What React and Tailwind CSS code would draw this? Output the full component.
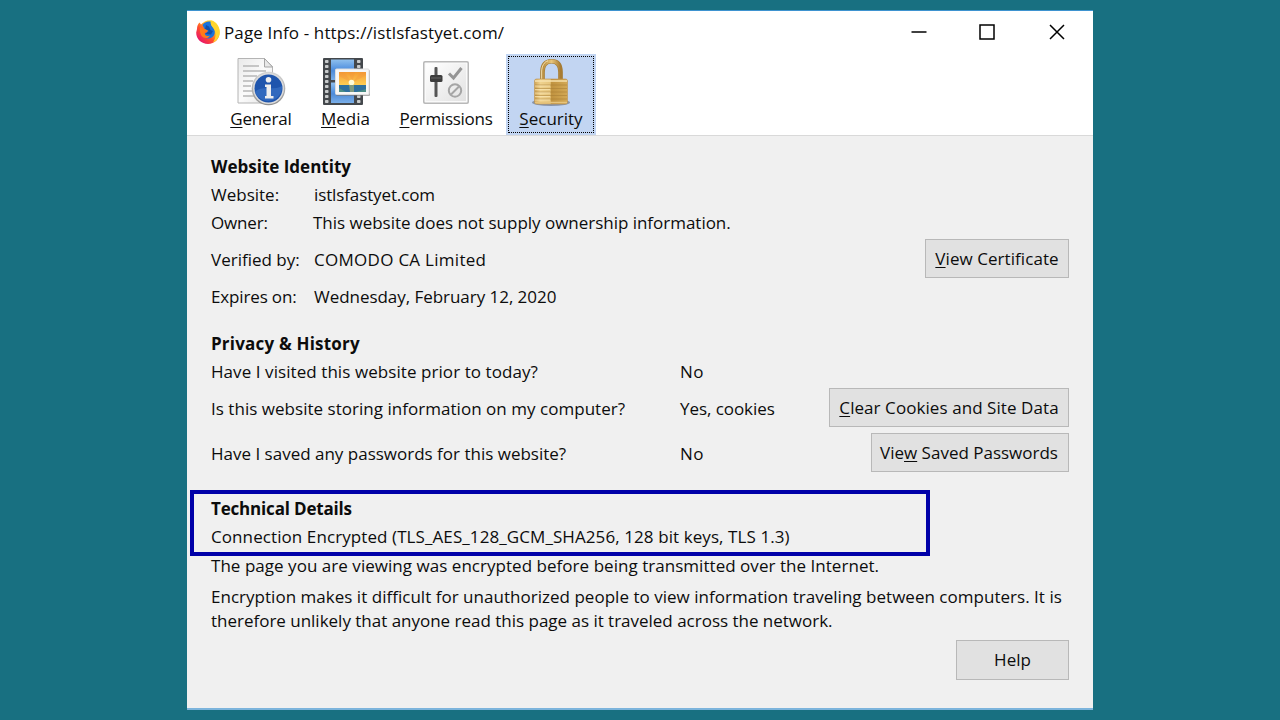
import React from "react";

const K = ({ children }) => (
  <span className="underline decoration-1 underline-offset-2">{children}</span>
);

function FirefoxIcon() {
  return (
    <svg width="24" height="24" viewBox="0 0 24 24">
      <defs>
        <linearGradient id="fx" x1="0.9" y1="0.1" x2="0.15" y2="0.9">
          <stop offset="0" stopColor="#fff44f" />
          <stop offset="0.35" stopColor="#ffb01c" />
          <stop offset="0.62" stopColor="#ff4f2b" />
          <stop offset="1" stopColor="#e8136d" />
        </linearGradient>
      </defs>
      <path d="M1 9C1 6 2 4 3.5 2.5L5 4.5C7 2 11 0 14.5 0.2L17 0.8C21 3 24 7.500 23.800 12.500C23.600 19 18.500 24 12 24C5.500 24 0 19 0.200 12.500Z" fill="url(#fx)" />
      <path d="M6.500 5C8.500 2 12 0.800 15 1.800C14 4 16 6 18 9C20 13 18 18 13 18.500C9.500 18.800 7 17 6 14L10 13L12 11L8.500 9Z" fill="#1a73dc" />
      <path d="M10 5L13 6.500L14.500 10L17 11L15 14.500L9 14L13 11L9 9Z" fill="#0b3e91" opacity=".65" />
      <path d="M15 0.500C21 2 24 8 23.500 13.500C23 18 20 21.500 17 22.500C20 18 20.500 13 18 9C16 6.500 14 4 15 0.500Z" fill="#ffd52e" />
      <path d="M4 7L8.500 9L12 10.500L9 12.500C8 15 11 17 14 15.500C12.500 19 7 19 5 15C4 12.500 3.500 10 4 7Z" fill="#ff7a18" />
    </svg>
  );
}

function GeneralIcon() {
  return (
    <svg width="52" height="52" viewBox="0 0 52 52">
      <defs>
        <linearGradient id="paper" x1="0" y1="0" x2="1" y2="1">
          <stop offset="0" stopColor="#e9e9e9" />
          <stop offset="0.5" stopColor="#fbfbfb" />
          <stop offset="1" stopColor="#e2e2e2" />
        </linearGradient>
        <linearGradient id="ring" x1="0" y1="0" x2="0" y2="1">
          <stop offset="0" stopColor="#d4d4d4" />
          <stop offset="1" stopColor="#8f8f8f" />
        </linearGradient>
      </defs>
      <path d="M3 2.500H29.500L37.500 10.500V47H3Z" fill="url(#paper)" stroke="#b4b4b4" />
      <path d="M29.500 2.500V11H37.500Z" fill="#e8e8e8" stroke="#a5a5a5" />
      <path d="M8 10H24M8 15H31M8 20H22M8 25H18M8 30H16M8 35H17M8 40H20" stroke="#b7b7b7" strokeWidth="1.500" />
      <circle cx="33.500" cy="32.500" r="16.800" fill="url(#ring)" />
      <circle cx="33.500" cy="32.500" r="15.500" fill="#dcdcdc" />
      <circle cx="33.500" cy="32.500" r="14" fill="#1f55ad" />
      <path d="M20 36C26 29 39 35 47 30A14 14 0 0 1 20 36Z" fill="#3c74c8" opacity=".65" />
      <circle cx="33.500" cy="23.800" r="2.800" fill="#eee" />
      <path d="M30 28.500H36V40H38.500V42.500H30V40H31.500V31H30Z" fill="#eee" />
    </svg>
  );
}

function MediaIcon() {
  const holes = [5, 10, 15, 20, 25, 30, 35, 40, 45];
  return (
    <svg width="52" height="52" viewBox="0 0 52 52">
      <defs>
        <linearGradient id="film" x1="0" y1="0" x2="0" y2="1">
          <stop offset="0" stopColor="#8fc0ee" />
          <stop offset="0.45" stopColor="#5493e0" />
          <stop offset="0.55" stopColor="#4e8bd8" />
          <stop offset="1" stopColor="#79aee8" />
        </linearGradient>
        <linearGradient id="sunset" x1="0" y1="0" x2="0" y2="1">
          <stop offset="0" stopColor="#f39b33" />
          <stop offset="1" stopColor="#ffcf55" />
        </linearGradient>
      </defs>
      <rect x="3" y="2" width="40" height="47" rx="1" fill="#44484c" />
      <rect x="11" y="3.500" width="23" height="20.500" fill="url(#film)" />
      <rect x="11" y="26.500" width="23" height="20.500" fill="url(#film)" />
      {holes.map((y) => (
        <g key={y} fill="#c9cccd">
          <rect x="5" y={y - 1} width="3.500" height="3" rx=".7" />
          <rect x="37" y={y - 1} width="3.500" height="3" rx=".7" />
        </g>
      ))}
      <rect x="16" y="14" width="34" height="26" rx="1" fill="#777" opacity=".6" />
      <rect x="15.500" y="13" width="33.500" height="25.500" rx="1" fill="#f7f7f7" stroke="#ddd" />
      <rect x="19" y="16" width="27" height="13.500" fill="url(#sunset)" />
      <path d="M32 27L19 20V16H24ZM32 27L29 16H35ZM32 27L41 16H46V19Z" fill="#f28f3b" opacity=".3" />
      <circle cx="31.500" cy="26.500" r="2.800" fill="#fffbd9" />
      <rect x="19" y="29" width="27" height="7" fill="#2f6f9d" />
      <path d="M29 29H34V36H30Z" fill="#7f9a80" />
      <path d="M19 32L26 36H19ZM46 33V36H36Z" fill="#4b8e86" />
    </svg>
  );
}

function PermissionsIcon() {
  return (
    <svg width="52" height="52" viewBox="0 0 52 52">
      <defs>
        <linearGradient id="panel" x1="0" y1="0" x2="1" y2="1">
          <stop offset="0" stopColor="#ffffff" />
          <stop offset="1" stopColor="#e2e2e2" />
        </linearGradient>
      </defs>
      <rect x="3" y="5" width="46" height="43" rx="2" fill="#b9b9b9" />
      <rect x="4.500" y="6.500" width="43" height="40" rx="1" fill="#fafafa" />
      <rect x="6" y="7.500" width="40" height="37.500" fill="url(#panel)" />
      <rect x="14.500" y="11" width="3" height="30" rx="1" fill="#555" />
      <rect x="10" y="19" width="12.500" height="7" rx="1.500" fill="#3d3d3d" />
      <path d="M11 22H21" stroke="#666" />
      <path d="M29 17.500L33.500 22L41.500 12" fill="none" stroke="#959595" strokeWidth="3" />
      <circle cx="35" cy="34.500" r="6.200" fill="none" stroke="#a5a5a5" strokeWidth="2" />
      <path d="M31 38.500L39 30.500" stroke="#a5a5a5" strokeWidth="2" />
    </svg>
  );
}

function LockIcon() {
  return (
    <svg width="52" height="52" viewBox="0 0 52 52">
      <defs>
        <linearGradient id="brass" x1="0" y1="0" x2="1" y2="0">
          <stop offset="0" stopColor="#d0a455" />
          <stop offset="0.18" stopColor="#f0d38f" />
          <stop offset="0.48" stopColor="#e6c57c" />
          <stop offset="0.5" stopColor="#c0923f" />
          <stop offset="1" stopColor="#d3a956" />
        </linearGradient>
        <linearGradient id="shackle" x1="0" y1="0" x2="1" y2="0">
          <stop offset="0" stopColor="#b58a3d" />
          <stop offset="0.5" stopColor="#e8c67c" />
          <stop offset="1" stopColor="#a87c32" />
        </linearGradient>
      </defs>
      <ellipse cx="26" cy="45.500" rx="19" ry="3.500" fill="#626b78" opacity=".6" />
      <path d="M17.500 24V15C17.500 8 20.500 4.200 26.500 4.200S35.500 8 35.500 15V24" fill="none" stroke="#a37b35" strokeWidth="4.600" />
      <path d="M17.500 24V15C17.500 8 20.500 4.200 26.500 4.200S35.500 8 35.500 15V24" fill="none" stroke="url(#shackle)" strokeWidth="3.400" />
      <path d="M16.700 23V15C16.700 9 19 5 23 3.800" fill="none" stroke="#f6e3b2" />
      <rect x="9.500" y="22" width="33" height="25" rx="2" fill="url(#brass)" stroke="#c0924a" strokeWidth=".6" />
      <path d="M10 24H42" stroke="#f7e2ad" strokeWidth="1.500" />
      <path d="M10 28H42M10 31.500H42M10 35H42M10 38.500H42M10 42H42" stroke="#a47a31" strokeOpacity=".5" />
      <path d="M10 29H25M10 32.500H25M10 36H25M10 39.500H25M10 43H25" stroke="#fae8b8" strokeOpacity=".65" />
      <path d="M10 45.500H42" stroke="#e6c47d" strokeWidth="1.500" />
    </svg>
  );
}

const Button = ({ className, children }) => (
  <button className={`-mt-[2px] flex shrink-0 items-center justify-center whitespace-nowrap border border-[#b8b8b8] bg-[#e1e1e1] ${className}`}>
    {children}
  </button>
);

export default function App() {
  return (
    <div className="flex h-[720px] w-[1280px] flex-col overflow-hidden bg-[#187081] pl-[187px] pt-[10px] font-['Open_Sans',sans-serif] text-[17px] text-[#0c0c0c]">
      <div className="flex h-[700px] w-[906px] flex-col border-b-2 border-t border-b-[#7cb4dc] border-t-[#3e93d0] bg-[#f0f0f0]">
        <header className="flex h-[43px] shrink-0 items-center bg-white pb-[2px] pl-[9px]">
          <FirefoxIcon />
          <h1 className="ml-1 mt-[2px] whitespace-nowrap tracking-[0.13px]">Page Info - https://istlsfastyet.com/</h1>
          <div className="ml-auto mr-[28px] flex w-[154px] items-center">
            <svg width="16" height="16" viewBox="0 0 16 16"><path d="M0.500 8H15.500" stroke="#000" strokeWidth="1.500" /></svg>
            <svg className="ml-[52px]" width="16" height="16" viewBox="0 0 16 16"><rect x="1" y="1" width="14" height="14" fill="none" stroke="#000" strokeWidth="1.500" /></svg>
            <svg className="ml-auto" width="16" height="16" viewBox="0 0 16 16"><path d="M1 1L15 15M15 1L1 15" stroke="#000" strokeWidth="1.500" /></svg>
          </div>
        </header>
        <nav className="flex h-[82px] shrink-0 border-b border-[#d9d9d9] bg-white pl-[31px] text-center">
          <div className="flex w-[86px] flex-col items-center pt-[2px]"><GeneralIcon /><span className="-mt-[2px] tracking-[-0.15px]"><K>G</K>eneral</span></div>
          <div className="flex w-[83px] flex-col items-center pt-[2px]"><MediaIcon /><span className="-mt-[2px]"><K>M</K>edia</span></div>
          <div className="flex w-[118px] flex-col items-center pt-[2px]"><PermissionsIcon /><span className="-mt-[2px] tracking-[-0.27px]"><K>P</K>ermissions</span></div>
          <div className="ml-[1px] h-[81px] w-[90px] bg-[#c2d5f2] p-[2px]">
            <div className="flex h-[77px] flex-col items-center border border-dotted border-black"><LockIcon /><span className="-mt-[3px]"><K>S</K>ecurity</span></div>
          </div>
        </nav>
        <main className="flex flex-col whitespace-nowrap pl-[24px] pr-[24px] pt-[16px]">
          <section className="flex flex-col">
            <h2 className="h-[28px] font-bold leading-[30px]">Website Identity</h2>
            <div className="flex h-[29px] items-center"><span className="w-[103px]">Website:</span><span className="tracking-[-0.12px]">istlsfastyet.com</span></div>
            <div className="flex h-[29px] items-center pb-[2px]"><span className="w-[102px] tracking-[-0.15px]">Owner:</span><span className="tracking-[-0.02px]">This website does not supply ownership information.</span></div>
            <div className="flex h-[42px] items-center"><span className="w-[103px] pt-[2px]">Verified by:</span><span className="pt-[2px] tracking-[0.28px]">COMODO CA Limited</span>
              <Button className="ml-auto h-[39px] w-[144px] pt-[2px]"><span className="tracking-[0.06px]"><K>V</K>iew Certificate</span></Button>
            </div>
            <div className="flex h-[34px] items-center"><span className="w-[103px] tracking-[-0.15px]">Expires on:</span><span className="tracking-[-0.04px]">Wednesday, February 12, 2020</span></div>
          </section>
          <section className="mt-[15px] flex flex-col">
            <h2 className="h-[28px] font-bold leading-[30px] tracking-[0.2px]">Privacy &amp; History</h2>
            <div className="flex h-[29px] items-center"><span className="w-[469px] tracking-[0.07px]">Have I visited this website prior to today?</span><span className="tracking-[0.4px]">No</span></div>
            <div className="flex h-[45px] items-center"><span className="w-[469px] tracking-[0.03px]">Is this website storing information on my computer?</span><span className="tracking-[-0.06px]">Yes, cookies</span>
              <Button className="ml-auto h-[39px] w-[240px]"><span className="tracking-[0.07px]"><K>C</K>lear Cookies and Site Data</span></Button>
            </div>
            <div className="flex h-[45px] items-center"><span className="w-[469px]">Have I saved any passwords for this website?</span><span className="tracking-[0.4px]">No</span>
              <Button className="ml-auto h-[39px] w-[198px] pr-[2px]"><span>Vie<K>w</K> Saved Passwords</span></Button>
            </div>
          </section>
          <section className="mt-[14px] flex flex-col">
            <div className="-ml-[21px] h-[66px] w-[740px] border-4 border-[#0000a8] pl-[17px]">
              <h2 className="h-[29px] font-bold leading-[29px] tracking-[-0.18px]">Technical Details</h2>
              <p className="h-[29px] leading-[28px] tracking-[0.088px]">Connection Encrypted (TLS_AES_128_GCM_SHA256, 128 bit keys, TLS 1.3)</p>
            </div>
            <p className="-mt-[4px] h-[29px] leading-[28px] tracking-[0.037px]">The page you are viewing was encrypted before being transmitted over the Internet.</p>
            <p className="mt-[4px] leading-[24px] tracking-[0.023px]">Encryption makes it difficult for unauthorized people to view information traveling between computers. It is<br /><span className="tracking-[-0.012px]">therefore unlikely that anyone read this page as it traveled across the network.</span></p>
            <Button className="ml-auto mt-[7px] h-[40px] w-[113px]"><span>Help</span></Button>
          </section>
        </main>
      </div>
    </div>
  );
}
